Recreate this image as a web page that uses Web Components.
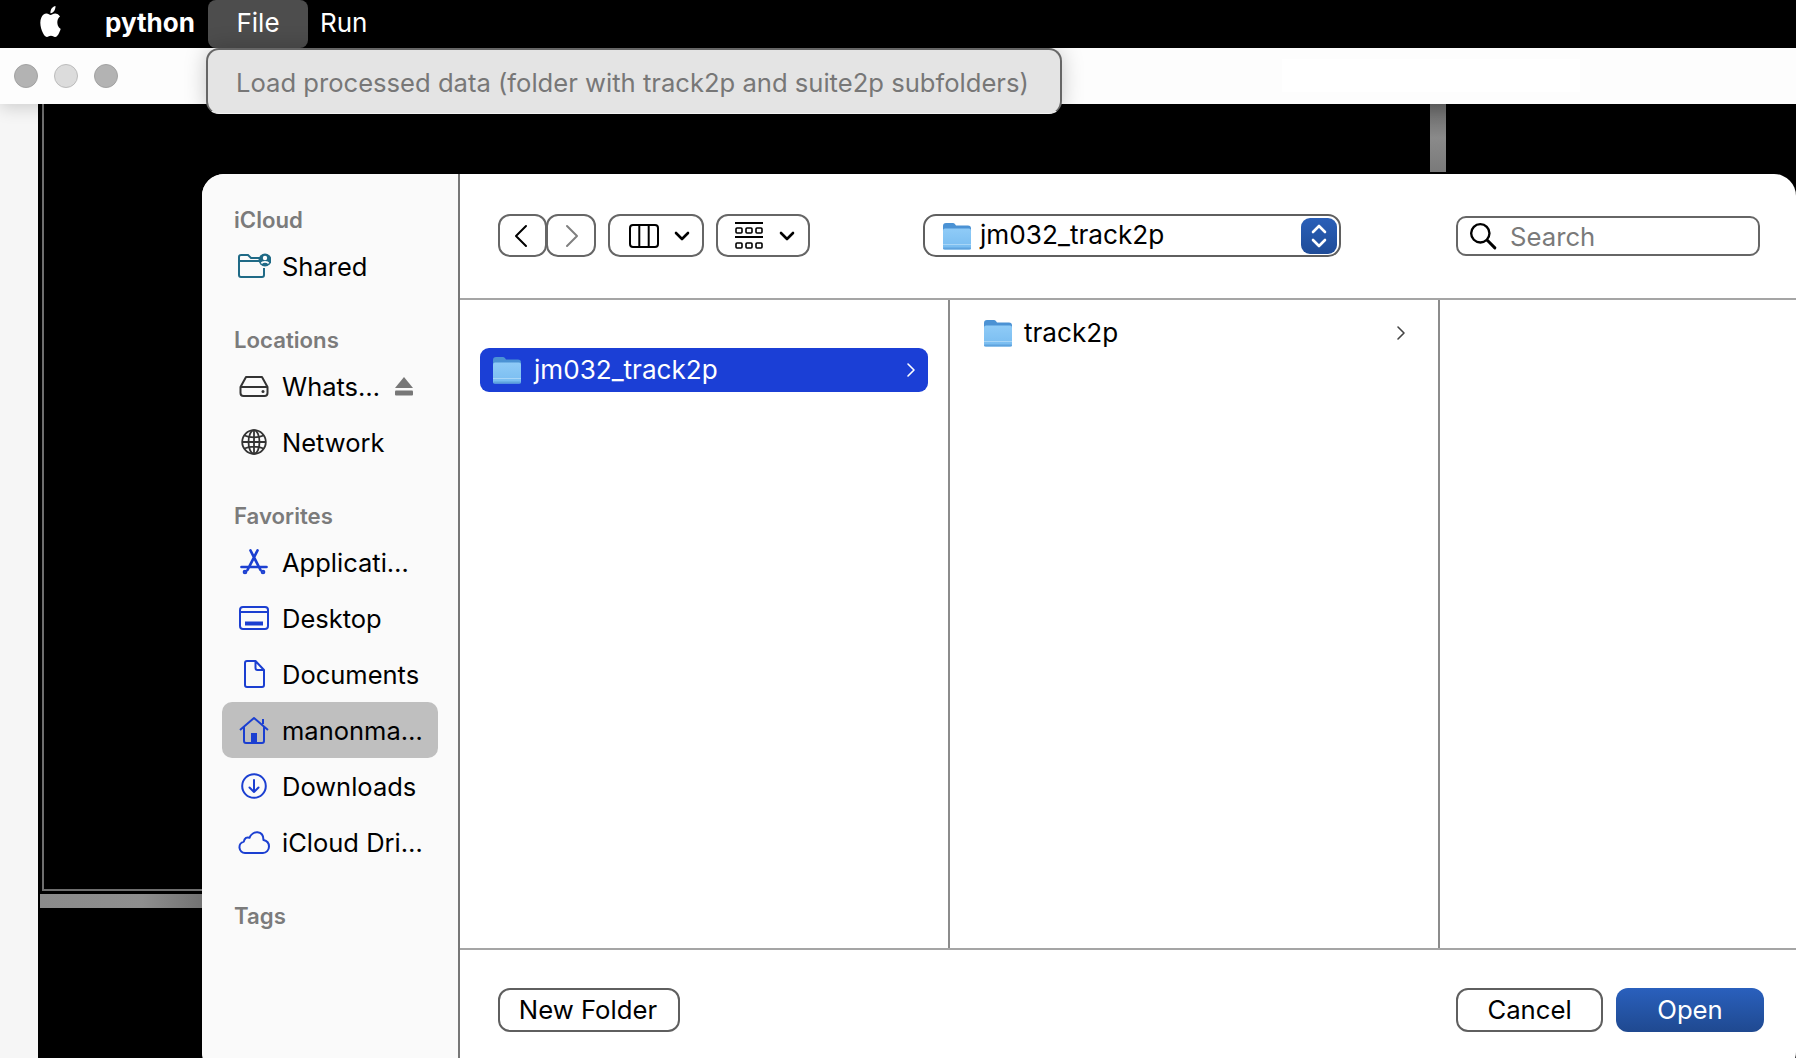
<!DOCTYPE html>
<html lang="en">
<head>
<meta charset="utf-8">
<title>Open dialog</title>
<style>
html,body{margin:0;padding:0;height:1058px;overflow:hidden;background:#000;font-family:Inter,"Liberation Sans",sans-serif;font-size:25.6px;color:#000}
#desk{position:relative;width:1796px;height:1058px;overflow:hidden;display:flex;flex-direction:column}
</style>
</head>
<body>
<div id="desk">
  <mac-menubar></mac-menubar>
  <app-window></app-window>
  <menu-popup>Load processed data (folder with track2p and suite2p subfolders)</menu-popup>
  <file-dialog>
    <side-bar slot="side">
      <side-section label="iCloud">
        <side-item icon="shared" tone="teal">Shared</side-item>
      </side-section>
      <side-section label="Locations">
        <side-item icon="drive" tone="dark" eject>Whats…</side-item>
        <side-item icon="globe" tone="dark">Network</side-item>
      </side-section>
      <side-section label="Favorites">
        <side-item icon="apps">Applicati…</side-item>
        <side-item icon="desktop">Desktop</side-item>
        <side-item icon="doc">Documents</side-item>
        <side-item icon="home" selected>manonma…</side-item>
        <side-item icon="down">Downloads</side-item>
        <side-item icon="cloud">iCloud Dri…</side-item>
      </side-section>
      <side-section label="Tags"></side-section>
    </side-bar>
    <dlg-toolbar slot="top"></dlg-toolbar>
    <col-browser slot="cols">
      <browser-col style="--pad:48px">
        <browser-row selected>jm032_track2p</browser-row>
      </browser-col>
      <browser-col style="--pad:11px">
        <browser-row>track2p</browser-row>
      </browser-col>
      <browser-col></browser-col>
    </col-browser>
    <dlg-footer slot="bottom"></dlg-footer>
  </file-dialog>
</div>
<script>
const def=(name,html)=>{
  customElements.define(name,class extends HTMLElement{
    constructor(){super();this.attachShadow({mode:'open'}).innerHTML=typeof html==='function'?html(this):html;}
  });
};
const ICONS={
 shared:`<svg width="34" height="26" viewBox="0 0 34 26" fill="none" stroke="currentColor" stroke-width="2"><path d="M2 8V4a2 2 0 0 1 2-2h7l3 3h9M2 8h20M2 8v14a2 2 0 0 0 2 2h21a2 2 0 0 0 2-2v-7"/><circle cx="28" cy="7" r="6.500" fill="currentColor" stroke="none"/><circle cx="28" cy="5" r="2.200" fill="#fff" stroke="none"/><path d="M24.500 10.500c.8-2.200 6.200-2.200 7 0" stroke="#fff" stroke-width="1.800"/></svg>`,
 drive:`<svg width="30" height="22" viewBox="0 0 30 22" fill="none" stroke="currentColor" stroke-width="2"><path d="M7 2h16l5.500 10v6a3 3 0 0 1-3 3H4.500a3 3 0 0 1-3-3v-6z" stroke-linejoin="round"/><path d="M1.500 12h27"/><circle cx="24" cy="16.500" r="1.500" fill="currentColor" stroke="none"/></svg>`,
 globe:`<svg width="26" height="26" viewBox="0 0 26 26" fill="none" stroke="currentColor" stroke-width="1.800"><circle cx="13" cy="13" r="11.800"/><ellipse cx="13" cy="13" rx="5.500" ry="11.800"/><path d="M1.500 13h23M3.500 6.500c5 2.500 14 2.500 19 0M3.500 19.500c5-2.500 14-2.500 19 0M13 1v24"/></svg>`,
 apps:`<svg width="28" height="26" viewBox="0 0 28 26" fill="none" stroke="currentColor" stroke-width="2.700" stroke-linecap="round"><path d="M10.500 1.500l10 19.500M17.500 1.500L7.500 21M1.500 18h25"/><circle cx="5" cy="23" r="1"/><circle cx="23" cy="23" r="1"/></svg>`,
 desktop:`<svg width="30" height="24" viewBox="0 0 30 24" fill="none" stroke="currentColor" stroke-width="2"><rect x="1" y="1" width="28" height="22" rx="3"/><path d="M1 6h28"/><rect x="6" y="15.500" width="18" height="4" fill="currentColor" stroke="none"/></svg>`,
 doc:`<svg width="22" height="28" viewBox="0 0 22 28" fill="none" stroke="currentColor" stroke-width="2" stroke-linejoin="round"><path d="M4 1h8.500L21 10v15a2 2 0 0 1-2 2H4a2 2 0 0 1-2-2V3a2 2 0 0 1 2-2zM12.500 1v7a2 2 0 0 0 2 2H21"/></svg>`,
 home:`<svg width="30" height="28" viewBox="0 0 30 28" fill="none" stroke="currentColor" stroke-width="2" stroke-linejoin="round"><path d="M1 14L15 2l14 12M5 11v14a2 2 0 0 0 2 2h16a2 2 0 0 0 2-2V11M24 8V3"/><rect x="12" y="17" width="6" height="10" fill="currentColor" stroke="none"/></svg>`,
 down:`<svg width="26" height="26" viewBox="0 0 26 26" fill="none" stroke="currentColor" stroke-width="2" stroke-linecap="round" stroke-linejoin="round"><circle cx="13" cy="13" r="11.800"/><path d="M13 7v12M8.500 14.500L13 19l4.500-4.500"/></svg>`,
 cloud:`<svg width="32" height="23" viewBox="0 0 32 23" fill="none" stroke="currentColor" stroke-width="2" stroke-linejoin="round"><path d="M7 22a5.800 5.800 0 0 1-1.200-11.400C6.500 7 9 5.800 11.500 6.800 13 3 16.500 1 19.500 1.300c4 .4 6 3.700 6 7.700 3.700.8 5.500 3.300 5.500 6.500 0 3.800-2.800 6.500-6 6.500z"/></svg>`
};
def('mac-menubar',`<style>
:host{display:flex;align-items:stretch;height:48px;background:#000;color:#fff;font-size:26px;flex:none;position:relative;z-index:3;line-height:46px}
svg{align-self:flex-start;margin:6px 0 0 38px;flex:none}
b{font-weight:700;margin-left:42px;width:89px}
.f{width:100px;margin-left:14px;background:#4d4d4d;border-radius:8px;text-align:center;box-sizing:border-box}
.r{margin-left:12px}
</style>
<svg width="25" height="31" viewBox="0 0 24 24" preserveAspectRatio="none" fill="#fff"><path d="M12.152 6.896c-.948 0-2.415-1.078-3.960-1.040-2.040.027-3.910 1.183-4.961 3.014-2.117 3.675-.546 9.103 1.519 12.090 1.013 1.454 2.208 3.090 3.792 3.039 1.520-.065 2.090-.987 3.935-.987 1.831 0 2.350.987 3.960.948 1.637-.026 2.676-1.480 3.676-2.948 1.156-1.688 1.636-3.325 1.662-3.415-.039-.013-3.182-1.221-3.220-4.857-.026-3.040 2.480-4.494 2.597-4.559-1.429-2.090-3.623-2.324-4.390-2.376-2-.156-3.675 1.090-4.610 1.090zM15.530 3.830c.843-1.012 1.400-2.427 1.245-3.830-1.207.052-2.662.805-3.532 1.818-.780.896-1.454 2.338-1.273 3.714 1.338.104 2.715-.688 3.559-1.701"/></svg>
<b>python</b><span class="f">File</span><span class="r">Run</span>`);
def('app-window',`<style>
:host{display:flex;flex-direction:column;flex:1;min-height:0}
.bar{height:56px;background:#fdfdfd;flex:none;display:flex;align-items:center;gap:16px;padding-left:14px;box-shadow:0 4px 16px rgba(0,0,0,.16);position:relative;z-index:1}
i{width:22px;height:22px;border-radius:50%;background:#b3b3b3;border:1px solid #a2a2a2}
i.m{background:#dcdcdc;border-color:#bcbcbc}
.glow{position:absolute;left:1282px;top:11px;width:298px;height:33px;background:#fff}
.body{flex:1;display:flex;min-height:0}
.left{width:38px;background:#f6f6f6;flex:none}
.cv{flex:1;background:#000;position:relative;padding-left:4px}
.frame{height:785px;border-left:2px solid #6e6e6e;border-bottom:2px solid #6e6e6e}
.hbar{height:14px;margin:3px 0 0 -2px;width:170px;background:linear-gradient(90deg,#8b8b8b,#8e8e8e 60%,#6f6f6f)}
.vbar{position:absolute;left:1392px;top:0;width:16px;height:68px;background:linear-gradient(#666,#8a8a8a 50%,#7a7a7a)}
</style>
<div class="bar"><i></i><i class="m"></i><i></i><span class="glow"></span></div>
<div class="body"><div class="left"></div><div class="cv"><div class="frame"></div><div class="hbar"></div><div class="vbar"></div></div></div>`);
def('menu-popup',`<style>
:host{position:absolute;left:206px;top:48px;width:856px;height:66px;box-sizing:border-box;background:#e4e4e4;border:2px solid #666;border-bottom:1px solid #f2f2f2;border-radius:13px;z-index:4;display:flex;align-items:center;padding:1px 0 0 28px;color:#777;font-size:25.600px;box-shadow:0 0 22px rgba(0,0,0,.22);white-space:nowrap}
</style><slot></slot>`);
def('file-dialog',`<style>
:host{position:absolute;left:202px;top:174px;width:1594px;height:900px;background:#fff;border-radius:22px;overflow:hidden;display:grid;grid-template-columns:258px 1fr;grid-template-rows:126px 650px 1fr;z-index:2}
::slotted([slot=side]){grid-row:1/4}
</style><slot name="side"></slot><slot name="top"></slot><slot name="cols"></slot><slot name="bottom"></slot>`);
def('side-bar',`<style>
:host{display:block;background:#fafafa;border-right:2px solid #777;padding-top:27px;box-sizing:border-box;font-size:25.500px}
</style><slot></slot>`);
def('side-section',h=>`<style>
:host{display:block;margin-bottom:27px}
.h{height:37px;line-height:38px;padding-left:32px;font-size:22.200px;font-weight:600;color:#7b7b7b}
</style><div class="h">${h.getAttribute('label')}</div><slot></slot>`);
def('side-item',h=>{
 const t={teal:'#1f6a86',dark:'#333'}[h.getAttribute('tone')]||'#1b3fd1';
 return `<style>
:host{display:flex;align-items:center;height:56px;margin:0 20px;border-radius:10px;padding-left:14px;white-space:nowrap;${h.hasAttribute('selected')?'background:#bfbfbf;':''}}
.i{width:36px;height:36px;display:flex;align-items:center;justify-content:center;color:${t};margin-right:10px;flex:none}
.e{margin-left:14px;display:flex}
</style><span class="i">${ICONS[h.getAttribute('icon')]}</span><slot></slot>${h.hasAttribute('eject')?'<span class="e"><svg width="20" height="20" viewBox="0 0 20 20" fill="#777"><path d="M10 1l9 11H1z"/><rect x="1" y="14.500" width="18" height="5" rx="1"/></svg></span>':''}`;
});
def('folder-icon',`<style>:host{display:inline-flex;flex:none}</style>
<svg width="30" height="28" viewBox="0 0 30 28"><defs><linearGradient id="g" x1="0" y1="0" x2="0" y2="1"><stop offset="0" stop-color="#8fcbf7"/><stop offset="1" stop-color="#78bcf0"/></linearGradient></defs>
<path d="M1 4a3 3 0 0 1 3-3h7c1.500 0 2 1 3 2.500h12a3 3 0 0 1 3 3V10H1z" fill="#4b92d4"/>
<rect x="1" y="6.500" width="28" height="21" rx="2" fill="url(#g)"/><rect x="1" y="22" width="28" height="1" fill="#a8d6f7"/><rect x="1" y="25.500" width="28" height="2" rx="1" fill="#5fa3de"/></svg>`);
def('tool-btn',`<style>
:host{display:flex;align-items:center;justify-content:center;box-sizing:border-box;height:43px;border:2px solid #666;border-radius:12px;background:#fff}
</style><slot></slot>`);
def('dlg-toolbar',`<style>
:host{display:flex;align-items:flex-start;padding:40px 0 0 38px;border-bottom:2px solid #a5a5a5;box-sizing:border-box;position:relative}
svg{display:block}
.nav{display:flex}
tool-btn.b{width:49px;padding-right:4px}
tool-btn.fw{width:50px;margin-left:-1px;padding-left:1px}
tool-btn.v{width:96px;margin-left:12px;gap:15px;padding-left:6px}
tool-btn.g{width:94px;margin-left:12px;gap:16px;padding-left:3px}
.path{margin-left:113px;width:418px;height:43px;box-sizing:border-box;border:2px solid #5f5f5f;border-radius:13px;display:flex;align-items:center;padding:0 2px 0 17px;font-size:26.200px}
.path span{margin-left:8px;flex:1;position:relative;top:-1px}
.step{width:36px;height:36px;border-radius:9px;background:linear-gradient(#2a5fb8,#1f4c98);display:flex;align-items:center;justify-content:center}
.search{margin:2px 0 0 115px;width:304px;height:40px;box-sizing:border-box;border:2px solid #666;border-radius:10px;display:flex;align-items:center;padding-left:11px;color:#7a7a7a;font-size:25.700px}
.search span{margin-left:13px}
</style>
<div class="nav"><tool-btn class="b"><svg width="16" height="24" viewBox="0 0 16 24" fill="none" stroke="#000" stroke-width="2" stroke-linecap="round" stroke-linejoin="round"><path d="M13 2L3 12l10 10"/></svg></tool-btn>
<tool-btn class="fw"><svg width="16" height="24" viewBox="0 0 16 24" fill="none" stroke="#808080" stroke-width="2" stroke-linecap="round" stroke-linejoin="round"><path d="M3 2l10 10L3 22"/></svg></tool-btn></div>
<tool-btn class="v"><svg width="30" height="24" viewBox="0 0 30 24" fill="none" stroke="#000" stroke-width="2"><rect x="1" y="1" width="28" height="22" rx="3"/><path d="M10.300 1v22M19.700 1v22"/></svg><svg width="16" height="10" viewBox="0 0 16 10" fill="none" stroke="#000" stroke-width="2.600" stroke-linecap="round" stroke-linejoin="round"><path d="M2 2l6 6 6-6"/></svg></tool-btn>
<tool-btn class="g"><svg width="28" height="28" viewBox="0 0 28 28" fill="none" stroke="#000" stroke-width="1.600"><path d="M0 1h28M0 15h28" stroke-width="2"/><rect x="1" y="6" width="6" height="5" rx="1"/><rect x="11" y="6" width="6" height="5" rx="1"/><rect x="21" y="6" width="6" height="5" rx="1"/><rect x="1" y="21" width="6" height="5" rx="1"/><rect x="11" y="21" width="6" height="5" rx="1"/><rect x="21" y="21" width="6" height="5" rx="1"/></svg><svg width="16" height="10" viewBox="0 0 16 10" fill="none" stroke="#000" stroke-width="2.600" stroke-linecap="round" stroke-linejoin="round"><path d="M2 2l6 6 6-6"/></svg></tool-btn>
<div class="path"><folder-icon></folder-icon><span>jm032_track2p</span><div class="step"><svg width="18" height="28" viewBox="0 0 18 28" fill="none" stroke="#fff" stroke-width="2.600" stroke-linecap="round" stroke-linejoin="round"><path d="M3 10l6-6 6 6M3 18l6 6 6-6"/></svg></div></div>
<div class="search"><svg width="28" height="28" viewBox="0 0 26 26" fill="none" stroke="#000" stroke-width="2.200" stroke-linecap="round"><circle cx="10.500" cy="10.500" r="8.500"/><path d="M17 17l7 7" stroke-width="2.800"/></svg><span>Search</span></div>`);
def('col-browser',`<style>
:host{display:grid;grid-template-columns:490px 490px 1fr;border-bottom:2px solid #a5a5a5;box-sizing:border-box;font-size:26.100px}
</style><slot></slot>`);
def('browser-col',`<style>
:host{display:block;border-right:2px solid #8c8c8c;padding-top:var(--pad,0);box-sizing:border-box;height:100%}
:host(:last-child){border-right:0}
</style><slot></slot>`);
def('browser-row',h=>{
 const s=h.hasAttribute('selected');
 return `<style>
:host{display:flex;align-items:center;height:44px;margin:0 20px;border-radius:9px;padding:0 12px 0 12px;${s?'background:#1b3fd6;color:#fff;':'margin-left:0;padding-left:33px;'}}
span{flex:1;margin-left:${s?12:11}px;position:relative;top:-1px}
</style><folder-icon></folder-icon><span><slot></slot></span>
<svg width="10" height="16" viewBox="0 0 10 16" fill="none" stroke="${s?'#fff':'#444'}" stroke-width="1.600" stroke-linecap="round" stroke-linejoin="round"><path d="M2 2l6 6-6 6"/></svg>`;
});
def('mac-btn',`<style>
:host{display:flex;align-items:center;justify-content:center;box-sizing:border-box;height:44px;border-radius:12px;border:2px solid #5f5f5f;background:#fff;font-size:25.700px;padding-bottom:2px}
:host([primary]){border:0;background:linear-gradient(#2a60bd,#1f4990);color:#fff}
</style><slot></slot>`);
def('dlg-footer',`<style>
:host{display:flex;align-items:flex-start;padding:38px 32px 0 38px}
.new{width:182px;padding-right:2px}.c{width:147px;margin-left:auto}.o{width:148px;margin-left:13px}
</style><mac-btn class="new">New Folder</mac-btn><mac-btn class="c">Cancel</mac-btn><mac-btn class="o" primary>Open</mac-btn>`);
</script>
</body>
</html>
